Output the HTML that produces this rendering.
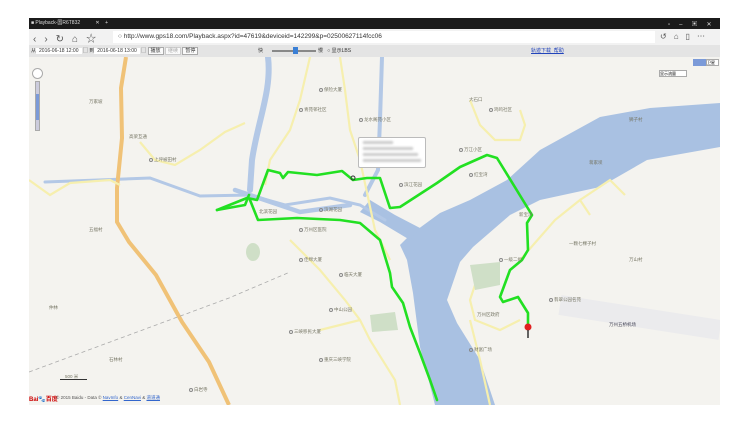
<!DOCTYPE html>
<html><head><meta charset="utf-8"><style>
*{margin:0;padding:0;box-sizing:border-box}
body{width:750px;height:437px;background:#fff;position:relative;overflow:hidden;font-family:"Liberation Sans","Noto Sans CJK SC",sans-serif}
.abs{position:absolute}
.lbl{position:absolute;font-size:4.5px;color:#776;white-space:nowrap}
.lbl i{display:inline-block;width:4px;height:4px;border:0.6px solid #888;border-radius:50%;margin-right:1px;vertical-align:middle}
</style></head><body>
<div class="abs" style="left:29px;top:18px;width:691px;height:11px;background:#1b1b1b"></div>
<div class="abs" style="left:31px;top:19px;font-size:5px;color:#ddd">■ Playback-国R6T832 &nbsp;&nbsp;&nbsp;&nbsp;&nbsp;&nbsp;&nbsp;&nbsp;&nbsp;&nbsp;✕ &nbsp;&nbsp;&nbsp;+</div>
<div class="abs" style="left:668px;top:19px;font-size:6px;color:#ddd;letter-spacing:9px">▫–▣✕</div>
<div class="abs" style="left:29px;top:29px;width:691px;height:16px;background:#f2f2f2"></div>
<div class="abs" style="left:33px;top:30px;font-size:10px;color:#555;letter-spacing:8px">‹›↻⌂☆</div>
<div class="abs" style="left:113px;top:31px;width:542px;height:12px;background:#fff"></div>
<div class="abs" style="left:118px;top:33px;font-size:6.5px;color:#333">○ http://www.gps18.com/Playback.aspx?id=47619&amp;deviceid=142299&amp;p=02500627114fcc06</div>
<div class="abs" style="left:660px;top:31px;font-size:8px;color:#555;letter-spacing:7px">↺⌂▯⋯</div>
<div class="abs" style="left:29px;top:45px;width:691px;height:12px;background:#e4e4e4"></div>
<div class="abs" style="left:31px;top:47px;font-size:5px;color:#333">从<span style="background:#fff;padding:0 3px">2016-06-18 12:00</span> ▢ 到<span style="background:#fff;padding:0 3px">2016-06-18 13:00</span> ▢ <span style="background:#fafafa;border:1px solid #aaa;padding:0 2px">播放</span> <span style="background:#fafafa;border:1px solid #ccc;color:#aaa;padding:0 2px">继续</span> <span style="background:#fafafa;border:1px solid #aaa;padding:0 2px">暂停</span></div>
<div class="abs" style="left:258px;top:47px;font-size:5px;color:#333">快</div>
<div class="abs" style="left:272px;top:50px;width:44px;height:2px;background:#888"></div>
<div class="abs" style="left:293px;top:47px;width:5px;height:7px;background:#3a7fd5"></div>
<div class="abs" style="left:318px;top:47px;font-size:5px;color:#333">慢 &nbsp; ○ 显示LBS</div>
<div class="abs" style="left:531px;top:47px;font-size:5px;color:#2244bb;text-decoration:underline">轨迹下载 &nbsp;帮助</div>
<div class="abs" style="left:29px;top:57px;width:691px;height:348px;background:#f4f3ef;overflow:hidden">
<svg width="691" height="348" viewBox="29 57 691 348" style="position:absolute;left:0;top:0">
<g fill="#a9c1e2" stroke="none">
<path d="M720,103 L650,108 L600,117 L540,150 L507,180 L470,200 L440,213 L410,235 L400,245 L407,260 L413,293 L420,347 L433,397 L435,405 L495,405 L480,360 L457,323 L447,300 L460,262 L473,247 L510,215 L540,200 L600,187 L647,160 L720,147 Z"/>
<path d="M410,240 L380,222 L360,212 L370,200 L395,215 L420,228 Z"/>
</g>
<g fill="none" stroke="#b3c8e6" stroke-linecap="round">
<path d="M268,57 C272,90 258,120 252,160 L250,190" stroke-width="6"/>
<path d="M382,57 L380,120 L378,170 L365,195" stroke-width="4"/>
<path d="M45,182 L150,178 L200,196 L250,195 L285,205 L330,198 L360,205 L385,220" stroke-width="3"/>
<path d="M235,190 L300,212 L350,205" stroke-width="4.5"/>
</g>
<path d="M126,57 L121,88 L122,138 L117,188 L117,222 L129,242 L156,275 L182,322 L209,362 L229,405" fill="none" stroke="#f0c277" stroke-width="4"/>
<g fill="none" stroke="#f6efae" stroke-width="2.2">
<path d="M29,180 L50,195 L70,183 L110,180 L120,185"/>
<path d="M140,142 L155,160 L175,165 L200,150 L225,132 L245,123"/>
<path d="M310,57 L300,100 L290,130 L270,160 L265,185"/>
<path d="M340,57 L345,90 L350,130 L360,160 L375,230 L390,260"/>
<path d="M290,240 L320,270 L345,300 L360,320 L370,340 L395,380 L400,405"/>
<path d="M470,100 L480,125 L495,140 L520,140 L525,125 L520,110"/>
<path d="M480,270 L470,300 L475,320 L500,330 L520,320"/>
<path d="M520,260 L555,220 L580,200 L590,215"/>
<path d="M580,200 L610,180 L625,195"/>
<path d="M470,320 L480,360 L490,405"/>
<path d="M320,330 L360,320"/>
</g>
<path d="M470,265 L500,262 L500,285 L475,290 Z" fill="#cfdfc7"/>
<path d="M370,315 L395,312 L398,330 L372,332 Z" fill="#cfdfc7"/>
<ellipse cx="253" cy="252" rx="7" ry="9" fill="#cfdfc7"/>
<path d="M29,372 L229,298 L290,272" fill="none" stroke="#aaa" stroke-width="0.8" stroke-dasharray="4,3"/>
<path d="M560,305 L720,330" stroke="#ebebed" stroke-width="20"/>
<g fill="none" stroke="#22e022" stroke-width="2.6" stroke-linejoin="round" stroke-linecap="round">
<path d="M217,210 L247,198 L257,200 L268,170 L280,173 L283,178 L288,172 L317,175 L342,171 L353,180 L367,178 L380,178 L390,208 L400,207 L437,183 L460,167 L487,155 L497,158 L532,215 L527,223 L528,250 L522,260 L510,270 L500,297 L503,302 L518,297 L528,313 L528,327"/>
<path d="M217,210 L245,205 L249,195"/>
<path d="M250,200 L258,220 L297,218 L340,220 L360,223 L380,240 L390,273 L392,287 L403,303 L410,327 L420,353 L430,380 L437,400"/>
</g>
<circle cx="528" cy="327" r="3.5" fill="#e02020"/>
<path d="M528,330 L528,338" stroke="#333" stroke-width="1.5"/>
<circle cx="353" cy="178" r="2" fill="none" stroke="#333" stroke-width="1"/>
</svg>
<div class="abs" style="left:329px;top:80px;width:68px;height:31px;background:#fff;border:1px solid #bbb;border-radius:2px"></div>
<div class="abs" style="left:334px;top:84px;width:30px;height:3px;background:#ccc;filter:blur(1px)"></div>
<div class="abs" style="left:334px;top:90px;width:50px;height:3px;background:#ccc;filter:blur(1px)"></div>
<div class="abs" style="left:334px;top:96px;width:55px;height:3px;background:#ccc;filter:blur(1px)"></div>
<div class="abs" style="left:334px;top:102px;width:58px;height:3px;background:#ccc;filter:blur(1px)"></div>
<div class="abs" style="left:3px;top:11px;width:11px;height:11px;border:1px solid #aaa;border-radius:50%;background:#fff"></div>
<div class="abs" style="left:6px;top:24px;width:5px;height:50px;background:#ccd;border:1px solid #aaa"></div>
<div class="abs" style="left:7px;top:37px;width:3px;height:26px;background:#7b9ad8"></div>
<div class="abs" style="left:664px;top:2px;width:13px;height:7px;background:#7b9ad8"></div>
<div class="abs" style="left:677px;top:2px;width:13px;height:7px;background:#fff;border:1px solid #aaa;font-size:4px">卫星</div>
<div class="abs" style="left:630px;top:13px;width:28px;height:7px;background:#fff;border:1px solid #aaa;font-size:4px">显示流量</div>
<div class="abs" style="left:31px;top:322px;width:27px;height:1px;background:#333"></div>
<div class="lbl" style="left:36px;top:317px">500 米</div>
<div class="lbl" style="left:0px;top:337px;color:#c00;font-weight:bold;font-size:6px">Bai🐾百度</div>
<div class="lbl" style="left:27px;top:338px;color:#555">© 2015 Baidu - Data © <u style="color:#36c">NavInfo</u> &amp; <u style="color:#36c">CenNavi</u> &amp; <u style="color:#36c">道道通</u></div>
<div class="lbl" style="left:60px;top:170px">五福村</div>
<div class="lbl" style="left:100px;top:77px">高梁互通</div>
<div class="lbl" style="left:230px;top:152px">北滨花园</div>
<div class="lbl" style="left:290px;top:150px"><i></i>滨湖花园</div>
<div class="lbl" style="left:370px;top:125px"><i></i>滨江花园</div>
<div class="lbl" style="left:540px;top:184px">一颗七棵子村</div>
<div class="lbl" style="left:580px;top:265px;color:#445">万州五桥机场</div>
<div class="lbl" style="left:300px;top:250px"><i></i>中山公园</div>
<div class="lbl" style="left:448px;top:255px">万州区政府</div>
<div class="lbl" style="left:270px;top:170px"><i></i>万州区医院</div>
<div class="lbl" style="left:460px;top:50px"><i></i>鸡鸣社区</div>
<div class="lbl" style="left:270px;top:50px"><i></i>青苑邨社区</div>
<div class="lbl" style="left:430px;top:90px"><i></i>万江小区</div>
<div class="lbl" style="left:60px;top:42px">万家坡</div>
<div class="lbl" style="left:160px;top:330px"><i></i>白岩寺</div>
<div class="lbl" style="left:290px;top:30px"><i></i>保险大厦</div>
<div class="lbl" style="left:330px;top:60px"><i></i>龙水阁苑小区</div>
<div class="lbl" style="left:120px;top:100px"><i></i>上坪被田村</div>
<div class="lbl" style="left:270px;top:200px"><i></i>佳绵大厦</div>
<div class="lbl" style="left:310px;top:215px"><i></i>临天大厦</div>
<div class="lbl" style="left:260px;top:272px"><i></i>三峡移民大厦</div>
<div class="lbl" style="left:290px;top:300px"><i></i>重庆三峡学院</div>
<div class="lbl" style="left:440px;top:115px"><i></i>红宝湾</div>
<div class="lbl" style="left:560px;top:103px">蒋家坝</div>
<div class="lbl" style="left:600px;top:60px">狮子村</div>
<div class="lbl" style="left:490px;top:155px">新宝湾</div>
<div class="lbl" style="left:470px;top:200px"><i></i>一级二组</div>
<div class="lbl" style="left:440px;top:290px"><i></i>财富广场</div>
<div class="lbl" style="left:520px;top:240px"><i></i>翡翠公园名苑</div>
<div class="lbl" style="left:80px;top:300px">石林村</div>
<div class="lbl" style="left:20px;top:248px">仲林</div>
<div class="lbl" style="left:440px;top:40px">大石口</div>
<div class="lbl" style="left:600px;top:200px">万山村</div>
</div>
</body></html>
